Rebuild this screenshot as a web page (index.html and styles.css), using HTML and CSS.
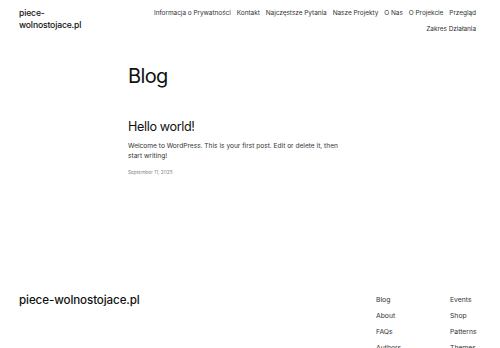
FILE: index.html
```html
<!DOCTYPE html>
<html lang="pl">
  <head>
    <meta charset="UTF-8" />
    <meta name="viewport" content="width=device-width, initial-scale=1.0" />
    <title>Blog – piece-wolnostojace.pl</title>
    <link rel="stylesheet" href="styles.css">
  </head>
  <body>
    <header class="site_header">
      <a class="site_title" href="#">piece-wolnostojace.pl</a>
      <nav class="site_nav">
        <ul>
          <li><a href="#">Informacja o Prywatności</a></li>
          <li><a href="#">Kontakt</a></li>
          <li><a href="#">Najczęstsze Pytania</a></li>
          <li><a href="#">Nasze Projekty</a></li>
          <li><a href="#">O Nas</a></li>
          <li><a href="#">O Projekcie</a></li>
          <li><a href="#">Przegląd</a></li>
          <li><a href="#">Zakres Działania</a></li>
        </ul>
      </nav>
    </header>

    <main class="content">
      <h1 class="page_title">Blog</h1>
      <article class="post">
        <h2 class="post_title"><a href="#">Hello world!</a></h2>
        <p class="post_excerpt">Welcome to WordPress. This is your first post. Edit or delete it, then start writing!</p>
        <div class="post_date">September 11, 2025</div>
      </article>
    </main>

    <footer class="site_footer">
      <a class="footer_title" href="#">piece-wolnostojace.pl</a>
      <div class="footer_links">
        <ul>
          <li><a href="#">Blog</a></li>
          <li><a href="#">About</a></li>
          <li><a href="#">FAQs</a></li>
          <li><a href="#">Authors</a></li>
        </ul>
        <ul>
          <li><a href="#">Events</a></li>
          <li><a href="#">Shop</a></li>
          <li><a href="#">Patterns</a></li>
          <li><a href="#">Themes</a></li>
        </ul>
      </div>
    </footer>
  </body>
</html>
```

FILE: styles.css
```css
* {
  margin: 0;
  padding: 0;
  box-sizing: border-box;
}

::-webkit-scrollbar {
  width: 4px;
}

::-webkit-scrollbar-thumb {
  background-color: #a8a8a8;
}

body {
  font-family: Inter, "Noto Sans", sans-serif;
  color: #111;
  background-color: #fff;
}

a {
  color: inherit;
  text-decoration: none;
}

li {
  list-style-type: none;
}

.site_header {
  display: flex;
  justify-content: space-between;
  align-items: flex-start;
  padding: 5px 24px 0 19px;
}

.site_title {
  width: 66px;
  font-size: 8.6px;
  font-weight: 500;
  letter-spacing: -0.15px;
  line-height: 12px;
  margin-top: 2px;
}

.site_nav ul {
  display: flex;
  flex-wrap: wrap;
  justify-content: flex-end;
  column-gap: 6px;
  width: 328px;
  font-size: 6.5px;
  letter-spacing: -0.05px;
  line-height: 16px;
  color: #333;
}

.content {
  padding: 25px 0 0 128px;
  width: 345px;
}

.page_title {
  font-size: 20px;
  font-weight: 400;
  letter-spacing: -0.6px;
  line-height: 28px;
}

.post {
  margin-top: 29px;
}

.post_title {
  font-size: 12.6px;
  font-weight: 400;
  letter-spacing: -0.35px;
  line-height: 16px;
}

.post_excerpt {
  margin-top: 6px;
  width: 212px;
  font-size: 6.6px;
  line-height: 10px;
  color: #333;
}

.post_date {
  margin-top: 8px;
  font-size: 4.8px;
  color: #888;
}

.site_footer {
  display: flex;
  justify-content: space-between;
  align-items: flex-start;
  margin-top: 117px;
  padding: 0 0 30px 19px;
}

.footer_title {
  font-size: 11.6px;
  font-weight: 500;
  letter-spacing: -0.1px;
  line-height: 16px;
}

.footer_links {
  display: flex;
  column-gap: 48px;
  width: 124px;
  font-size: 6.8px;
  line-height: 16px;
  color: #333;
}

.footer_links ul {
  width: 26px;
}
```
